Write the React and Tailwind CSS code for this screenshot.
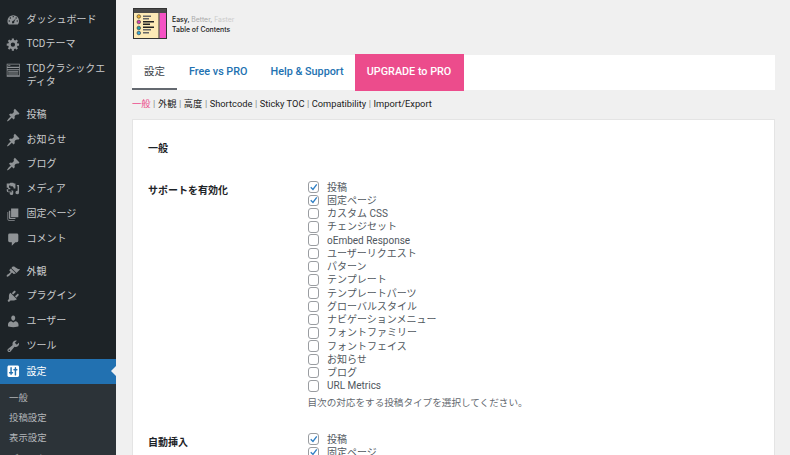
import React from "react";

const font = { fontFamily: "Roboto, 'Noto Sans CJK JP', sans-serif" };

// dashicons-ish drawings, 20x20 box
const icons = {
  dashboard:
    "M3.76 16h12.48A7.97 7.97 0 0 0 18 11a8 8 0 1 0-16 0c0 1.9.66 3.64 1.76 5zM10 4a1 1 0 1 1 0 2 1 1 0 0 1 0-2zM6 6a1 1 0 1 1 0 2 1 1 0 0 1 0-2zm8 0a1 1 0 1 1 0 2 1 1 0 0 1 0-2zm-9.5 4a1 1 0 1 1 0 2 1 1 0 0 1 0-2zm11 0a1 1 0 1 1 0 2 1 1 0 0 1 0-2zM13.5 7.5 11.3 12a1.6 1.6 0 1 1-1.5-.9z",
  gear:
    "M18 12h-2.18c-.17.7-.44 1.35-.81 1.93l1.54 1.54-2.1 2.1-1.54-1.54c-.58.36-1.23.63-1.91.79V19H8v-2.18c-.68-.16-1.33-.43-1.91-.79l-1.54 1.54-2.12-2.12 1.54-1.54c-.36-.58-.63-1.23-.79-1.91H1V9.03h2.17c.16-.7.44-1.35.8-1.94L2.43 5.55l2.1-2.1 1.54 1.54c.58-.37 1.24-.64 1.93-.81V2h3v2.18c.68.16 1.33.43 1.91.79l1.54-1.54 2.12 2.12-1.54 1.54c.36.59.64 1.24.8 1.94H18V12zm-8.5 1.5a3 3 0 1 0 0-6 3 3 0 0 0 0 6z",
  keyboard:
    "M1 1h18v18H1V1zm1 1v3h16V2H2zm0 5v1.5h16V7H2zm0 3v7h16v-7H2zm1 1.5h14V13H3v-1.5zm0 3h14V16H3v-1.5zM3 3h3v1H3V3z",
  pin:
    "M10.44 3.02l1.82-1.82 6.36 6.35-1.83 1.82c-1.05-.68-2.48-.57-3.41.36l-.75.75c-.92.93-1.04 2.35-.35 3.41l-1.83 1.82-2.41-2.41-2.8 2.79c-.42.42-3.38 2.71-3.8 2.29s1.86-3.39 2.28-3.81l2.79-2.79L4.1 9.36l1.83-1.82c1.05.69 2.48.57 3.4-.36l.75-.75c.93-.92 1.05-2.35.36-3.41z",
  media:
    "M1 2h4l1-1h4l1 1h2v7h-2.5V7.5L9 6H6V4.5a2 2 0 1 0 0 4V10H3V8H1V2zm0 8h2v3h4.5v-1.5L10 12v3.5a2.5 2.5 0 1 1-2-2.4V14H3a2 2 0 0 1-2-2v-2zM15 4h3v10.5a2.5 2.5 0 1 1-2-2.4V6h-1V4z",
  pages:
    "M7 14V2h10v12H7zm-1 1h7v1.5H5.5A1.5 1.5 0 0 1 4 15V5h2v10zm-3 1.5c0 .8.7 1.5 1.5 1.5H12v1H4a2 2 0 0 1-2-2V7h1v9.5z",
  comment:
    "M5 2h10a2 2 0 0 1 2 2v8a2 2 0 0 1-2 2h-2l-5 5v-5H5a2 2 0 0 1-2-2V4a2 2 0 0 1 2-2z",
  brush:
    "M14.48 11.06L7.41 3.99l1.5-1.5c.5-.56 2.3-.47 3.51.32 1.21.8 1.43 1.28 2.91 2.1 1.18.64 2.45 1.26 4.45.85zm-.71.71L6.7 4.7 4.93 6.47c-.39.39-.39 1.02 0 1.41l1.06 1.06c.39.39.39 1.03 0 1.42-.6.6-1.43 1.11-2.21 1.69-.35.26-.7.53-1.01.84C1.43 13.23.4 14.98 1.2 15.8c.8.8 2.57-.23 3.91-1.57.31-.31.58-.66.85-1.02.57-.78 1.08-1.61 1.69-2.21.39-.39 1.02-.39 1.41 0l1.06 1.06c.39.39 1.02.39 1.41 0z",
  plugin:
    "M13.11 4.36L9.87 7.6 8 5.73l3.24-3.24c.35-.34 1.05-.2 1.56.32.52.51.66 1.21.31 1.55zm-8 1.77l.91-1.12 9.01 9.01-1.19.84c-.71.71-2.63 1.16-3.82 1.16H6.14L4.9 17.26c-.59.59-1.54.59-2.12 0a1.49 1.49 0 0 1 0-2.12l1.24-1.24v-3.88c0-1.13.4-3.19 1.09-3.89zm7.26 3.97l3.24-3.24c.34-.35 1.04-.21 1.55.31.52.51.66 1.21.31 1.55l-3.24 3.25z",
  user:
    "M10 9.25c-2.27 0-2.73-3.44-2.73-3.44C7 4.02 7.82 2 9.97 2c2.16 0 2.98 2.02 2.71 3.81 0 0-.41 3.44-2.68 3.44zm0 2.57L12.72 10c2.39 0 4.52 2.33 4.52 4.53v2.49s-3.65 1.13-7.24 1.13c-3.65 0-7.24-1.13-7.24-1.13v-2.49c0-2.25 1.94-4.48 4.47-4.48z",
  tool:
    "M16.68 9.77c-1.34 1.34-3.3 1.67-4.95.99l-5.41 6.52c-.99.99-2.59.99-3.58 0s-.99-2.59 0-3.57l6.52-5.42c-.68-1.65-.35-3.61.99-4.95 1.28-1.28 3.12-1.62 4.72-1.06l-2.89 2.89 2.82 2.82 2.86-2.87c.53 1.58.18 3.39-1.08 4.65zM3.81 16.21c.4.39 1.04.39 1.43 0 .4-.4.4-1.04 0-1.43-.39-.4-1.03-.4-1.43 0-.39.39-.39 1.03 0 1.43z",
  settings:
    "M18 16V4c0-1.1-.9-2-2-2H4c-1.1 0-2 .9-2 2v12c0 1.1.9 2 2 2h12c1.1 0 2-.9 2-2zM8 11h1c.55 0 1 .45 1 1s-.45 1-1 1H8v1c0 .55-.45 1-1 1s-1-.45-1-1v-1H5c-.55 0-1-.45-1-1s.45-1 1-1h1V5c0-.55.45-1 1-1s1 .45 1 1v6zm7-2h-1v6c0 .55-.45 1-1 1s-1-.45-1-1V9h-1c-.55 0-1-.45-1-1s.45-1 1-1h1V5c0-.55.45-1 1-1s1 .45 1 1v2h1c.55 0 1 .45 1 1s-.45 1-1 1z",
};

const MenuIcon = ({ name, color = "#8f9396" }) => (
  <svg viewBox="0 0 20 20" className="w-[14.5px] h-[14.5px] shrink-0" fill={color} fillRule="evenodd">
    <path d={icons[name]} />
  </svg>
);

const MenuItem = ({ icon, label, two }) => (
  <div className={`flex pl-[5.5px] ${two ? "items-start h-[37.5px] pt-[6px]" : "items-center h-[24.8px]"}`}>
    <MenuIcon name={icon} />
    <span className="ml-[6.5px] w-[84px] text-[10px] leading-[12.5px] text-[#c9cbcd]">{label}</span>
  </div>
);

const Sidebar = () => (
  <div className="w-[116px] h-full shrink-0 bg-[#1d2327] pt-[7.5px] overflow-hidden">
    <MenuItem icon="dashboard" label="ダッシュボード" />
    <MenuItem icon="gear" label="TCDテーマ" />
    <MenuItem icon="keyboard" label="TCDクラシックエディタ" two />
    <div className="h-[8px]" />
    <MenuItem icon="pin" label="投稿" />
    <MenuItem icon="pin" label="お知らせ" />
    <MenuItem icon="pin" label="ブログ" />
    <MenuItem icon="media" label="メディア" />
    <MenuItem icon="pages" label="固定ページ" />
    <MenuItem icon="comment" label="コメント" />
    <div className="h-[8px]" />
    <MenuItem icon="brush" label="外観" />
    <MenuItem icon="plugin" label="プラグイン" />
    <MenuItem icon="user" label="ユーザー" />
    <MenuItem icon="tool" label="ツール" />
    <div className="relative flex items-center h-[25px] pl-[5.5px] bg-[#2271b1]">
      <MenuIcon name="settings" color="#ffffff" />
      <span className="ml-[6.5px] text-[10px] text-white">設定</span>
      <span className="absolute right-0 top-[7px] border-y-[5.5px] border-r-[5.5px] border-y-transparent border-r-[#f0f0f1]" />
    </div>
    <div className="bg-[#2c3338] pt-[4px] pb-[10px] pl-[9px] text-[9.4px] text-[#b4b7ba]">
      <div className="h-[20.4px] flex items-center">一般</div>
      <div className="h-[20.4px] flex items-center">投稿設定</div>
      <div className="h-[20.4px] flex items-center">表示設定</div>
      <div className="h-[20.4px] flex items-center">ディスカッション</div>
    </div>
  </div>
);

const Logo = () => (
  <svg viewBox="0 0 34 31" className="w-[34px] h-[31px]">
    <rect x="0.5" y="0.5" width="33" height="30" fill="#fdeab6" stroke="#333" />
    <rect x="1" y="1" width="32" height="4" fill="#4a4a4a" />
    <rect x="26.5" y="5" width="6.5" height="25" fill="#f552c4" />
    <rect x="25.5" y="5" width="1" height="25" fill="#333" />
    <circle cx="5.8" cy="8.5" r="1.8" fill="#f2b632" stroke="#333" strokeWidth=".6" />
    <circle cx="5.8" cy="14" r="1.8" fill="#d23fae" stroke="#333" strokeWidth=".6" />
    <circle cx="5.8" cy="20" r="1.8" fill="#1f9fb0" stroke="#333" strokeWidth=".6" />
    <circle cx="5.8" cy="25" r="1.8" fill="#35a8d8" stroke="#333" strokeWidth=".6" />
    <g fill="#666">
      <rect x="10" y="7.5" width="8" height="1.5" />
      <rect x="10" y="10" width="6" height="1.5" />
      <rect x="10" y="13" width="11" height="1.5" fill="#222" />
      <rect x="10" y="15.5" width="7" height="1.5" fill="#222" />
      <rect x="10" y="18.5" width="11" height="1.5" fill="#222" />
      <rect x="10" y="21" width="8" height="1.5" />
      <rect x="10" y="24" width="6" height="1.5" />
    </g>
  </svg>
);

const Check = ({ label, on }) => (
  <label className="flex items-center h-[13.25px]">
    <span className="w-[11.5px] h-[11.5px] rounded-[3px] border border-[#9a9da1] bg-white flex items-center justify-center shrink-0">
      {on && (
        <svg viewBox="0 0 12 12" className="w-[10px] h-[10px]">
          <path d="M2.2 6.2 5 9l4.8-6.4" fill="none" stroke="#2f7fc4" strokeWidth="1.7" />
        </svg>
      )}
    </span>
    <span className="ml-[8px] text-[10px] text-[#50575e]">{label}</span>
  </label>
);

const postTypes = [
  ["投稿", true],
  ["固定ページ", true],
  ["カスタム CSS"],
  ["チェンジセット"],
  ["oEmbed Response"],
  ["ユーザーリクエスト"],
  ["パターン"],
  ["テンプレート"],
  ["テンプレートパーツ"],
  ["グローバルスタイル"],
  ["ナビゲーションメニュー"],
  ["フォントファミリー"],
  ["フォントフェイス"],
  ["お知らせ"],
  ["ブログ"],
  ["URL Metrics"],
];

const subLinks = ["外観", "高度", "Shortcode", "Sticky TOC", "Compatibility", "Import/Export"];

export default function App() {
  return (
    <div className="flex w-[790px] h-[455px] overflow-hidden bg-[#f0f0f0]" style={font}>
      <Sidebar />
      <div className="flex-1 pl-4 pr-[15px] pt-2 min-w-0">
        <div className="flex items-center h-[31px] pl-px">
          <Logo />
          <div className="ml-[5px] text-[6.9px] leading-[10px] font-medium text-[#222] mt-[2px]" style={{ fontFamily: "Inter, sans-serif" }}>
            <div>
              Easy, <span className="text-[#aaa] font-normal">Better,</span> <span className="text-[#ccc] font-normal">Faster</span>
            </div>
            <div>Table of Contents</div>
          </div>
        </div>

        <div className="flex h-[35px] mt-[16px] bg-white">
          <div className="w-[45px] h-full flex items-center justify-center text-[10.5px] text-[#3c434a] border-b-2 border-[#646970]">設定</div>
          <div className="ml-3 flex items-center text-[10.8px] font-medium text-[#2271b1]">Free vs PRO</div>
          <div className="ml-[23px] flex items-center text-[10.8px] font-medium text-[#2271b1]">Help &amp; Support</div>
          <div className="ml-[11px] w-[109px] h-[37px] -mt-px flex items-center justify-center text-[10.8px] font-medium text-white bg-[#ec4c8c]">UPGRADE to PRO</div>
        </div>

        <div className="flex items-center h-[14px] mt-[7px] text-[9.3px] text-[#222]">
          <span className="text-[#ec4c8c]">一般</span>
          {subLinks.map((s) => (
            <span key={s}>
              <span className="text-[#888] mx-[2.5px]">|</span>
              {s}
            </span>
          ))}
        </div>

        <div className="mt-[8px] h-[400px] bg-white border border-[#e4e4e4] pl-[15px] pt-[22px]">
          <h2 className="text-[10px] leading-[14px] font-bold text-[#1d2327]">一般</h2>
          <div className="flex mt-[24.5px]">
            <div className="w-[159.5px] text-[10px] leading-[14px] font-bold text-[#1d2327] pt-[3.5px]">サポートを有効化</div>
            <div>
              {postTypes.map(([label, on]) => (
                <Check key={label} label={label} on={on} />
              ))}
              <p className="mt-[3px] text-[9.6px] leading-[14px] text-[#646970]">目次の対応をする投稿タイプを選択してください。</p>
            </div>
          </div>
          <div className="flex mt-[23px]">
            <div className="w-[159.5px] text-[10px] leading-[14px] font-bold text-[#1d2327] pt-[3.5px]">自動挿入</div>
            <div>
              <Check label="投稿" on />
              <Check label="固定ページ" on />
            </div>
          </div>
        </div>
      </div>
    </div>
  );
}
